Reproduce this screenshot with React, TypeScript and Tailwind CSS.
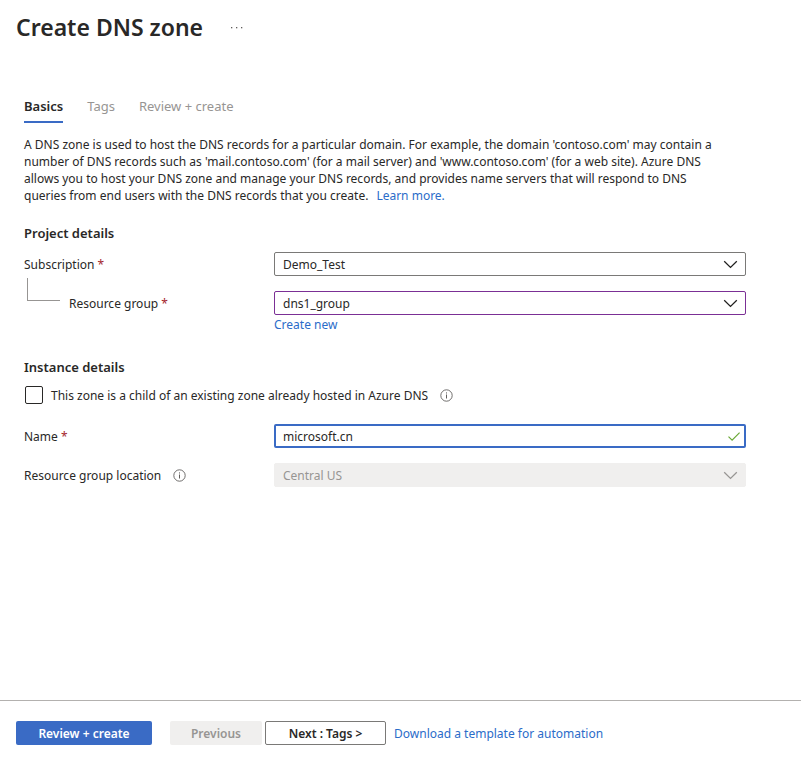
import { useState, type ReactNode, type SelectHTMLAttributes } from "react"

const tabs = [
  { id: "basics", label: "Basics" },
  { id: "tags", label: "Tags" },
  { id: "review", label: "Review + create" },
]

function Required() {
  return <span className="text-[#a4262c]"> *</span>
}

function InfoIcon() {
  return (
    <svg className="h-[13px] w-[13px] shrink-0" viewBox="0 0 13 13" fill="none" stroke="#605e5c" role="img" aria-label="More information">
      <circle cx="6.5" cy="6.5" r="5.7" strokeWidth="0.9" />
      <path d="M6.5 5.5v4M6.5 3.4v1.1" />
    </svg>
  )
}

function Select({ tone, children, ...props }: SelectHTMLAttributes<HTMLSelectElement> & { tone: string; children: ReactNode }) {
  return (
    <div className="relative">
      <select
        className={`block h-6 w-full appearance-none rounded-xs border px-2 leading-[17px] outline-none ${tone}`}
        {...props}
      >
        {children}
      </select>
      <svg
        className={`pointer-events-none absolute top-2 right-2 h-[9px] w-[15px] ${props.disabled ? "text-[#979593]" : "text-[#201f1e]"}`}
        viewBox="0 0 15 9"
        fill="none"
        stroke="currentColor"
        strokeWidth="1.3"
      >
        <path d="M1.2 1.2l6.3 6.2 6.3-6.2" />
      </svg>
    </div>
  )
}

export default function App() {
  const [activeTab, setActiveTab] = useState("basics")
  const [isChild, setIsChild] = useState(false)
  const [name, setName] = useState("microsoft.cn")

  return (
    <div className="flex min-h-screen flex-col bg-white font-['Noto_Sans',sans-serif] text-[12px] leading-[17px] text-[#292827]">
      <header className="flex items-center gap-6 px-4 pt-3">
        <h1 className="text-[23px] leading-[30px] font-semibold">Create DNS zone</h1>
        <button type="button" aria-label="More options" className="flex h-6 w-5 items-center justify-center">
          <svg className="h-[3px] w-3" viewBox="0 0 12 3" fill="#605e5c">
            <rect x="0" y="1" width="1.3" height="1.3" />
            <rect x="5" y="1" width="1.3" height="1.3" />
            <rect x="10" y="1" width="1.3" height="1.3" />
          </svg>
        </button>
      </header>

      <main className="mt-14 flex-1 pr-[55px] pb-8 pl-6">
        <nav className="flex gap-6 text-[13px]" role="tablist">
          {tabs.map((tab) => (
            <button
              key={tab.id}
              type="button"
              role="tab"
              aria-selected={tab.id === activeTab}
              onClick={() => setActiveTab(tab.id)}
              className={`border-b-2 pb-[6px] ${
                tab.id === activeTab ? "border-[#3a6bc5] font-semibold" : "border-transparent text-[#979593]"
              }`}
            >
              {tab.label}
            </button>
          ))}
        </nav>

        <p className="mt-[13px] max-w-[705px]">
          A DNS zone is used to host the DNS records for a particular domain. For example, the domain 'contoso.com' may contain a
          number of DNS records such as 'mail.contoso.com' (for a mail server) and 'www.contoso.com' (for a web site). Azure DNS
          allows you to host your DNS zone and manage your DNS records, and provides name servers that will respond to DNS
          queries from end users with the DNS records that you create.
          <a href="#learn" className="ml-2 inline-block text-[#2b6cc9]">Learn more.</a>
        </p>

        <h2 className="mt-[21px] text-[13px] font-semibold">Project details</h2>
        <div className="mt-[10px] grid grid-cols-[250px_1fr] items-center">
          <label htmlFor="subscription">
            Subscription
            <Required />
          </label>
          <Select id="subscription" tone="border-[#7a7977] bg-white">
            <option>Demo_Test</option>
          </Select>
        </div>
        <div className="grid grid-cols-[250px_1fr]">
          <div className="flex">
            <div className="mt-[2px] ml-[3px] h-[23px] w-[33px] border-b border-l border-[#979593]" />
            <label htmlFor="group" className="mt-[19px] ml-[9px]">
              Resource group
              <Required />
            </label>
          </div>
          <div className="mt-[15px]">
            <Select id="group" tone="border-[#7b2f95] bg-white">
              <option>dns1_group</option>
            </Select>
            <a href="#new" className="mt-px block text-[#2b6cc9]">Create new</a>
          </div>
        </div>

        <h2 className="mt-[26px] text-[13px] font-semibold">Instance details</h2>
        <div className="mt-[10px] flex h-[18px] items-center">
          <input
            id="child"
            type="checkbox"
            checked={isChild}
            onChange={(e) => setIsChild(e.target.checked)}
            className="mr-2 ml-px h-[18px] w-[18px] appearance-none rounded-xs border border-[#292827] checked:bg-[#3a6bc5]"
          />
          <div className="flex items-center gap-3">
            <label htmlFor="child">This zone is a child of an existing zone already hosted in Azure DNS</label>
            <InfoIcon />
          </div>
        </div>

        <div className="mt-5 grid grid-cols-[250px_1fr] items-center gap-y-[15px]">
          <label htmlFor="name">
            Name
            <Required />
          </label>
          <div className="relative">
            <input
              id="name"
              value={name}
              onChange={(e) => setName(e.target.value)}
              className="block h-6 w-full rounded-xs border-2 border-[#3a6bc5] pr-6 pl-[7px] outline-none"
            />
            <svg className="pointer-events-none absolute top-2 right-[6px] h-[9px] w-3" viewBox="0 0 12 9" fill="none" stroke="#6aa836" strokeWidth="1.2">
              <path d="M0.5 4.6l3.6 3.5L11.6 0.6" />
            </svg>
          </div>

          <div className="flex items-center gap-3">
            <label htmlFor="location">Resource group location</label>
            <InfoIcon />
          </div>
          <Select id="location" disabled tone="border-[#f0efee] bg-[#f0efee] text-[#979593] opacity-100">
            <option>Central US</option>
          </Select>
        </div>
      </main>

      <footer className="flex items-center border-t border-[#b3b1af] px-4 pt-5 pb-3">
        <button type="button" className="h-6 w-[136px] rounded-xs bg-[#3a6bc5] font-semibold text-white">
          Review + create
        </button>
        <button type="button" disabled className="ml-[18px] h-6 w-[92px] rounded-xs bg-[#f0efee] font-semibold text-[#979593]">
          Previous
        </button>
        <button type="button" className="ml-[3px] h-6 w-[121px] rounded-xs border border-[#7a7977] font-semibold">
          Next : Tags &gt;
        </button>
        <a href="#template" className="ml-2 text-[#2b6cc9]">Download a template for automation</a>
      </footer>
    </div>
  )
}
